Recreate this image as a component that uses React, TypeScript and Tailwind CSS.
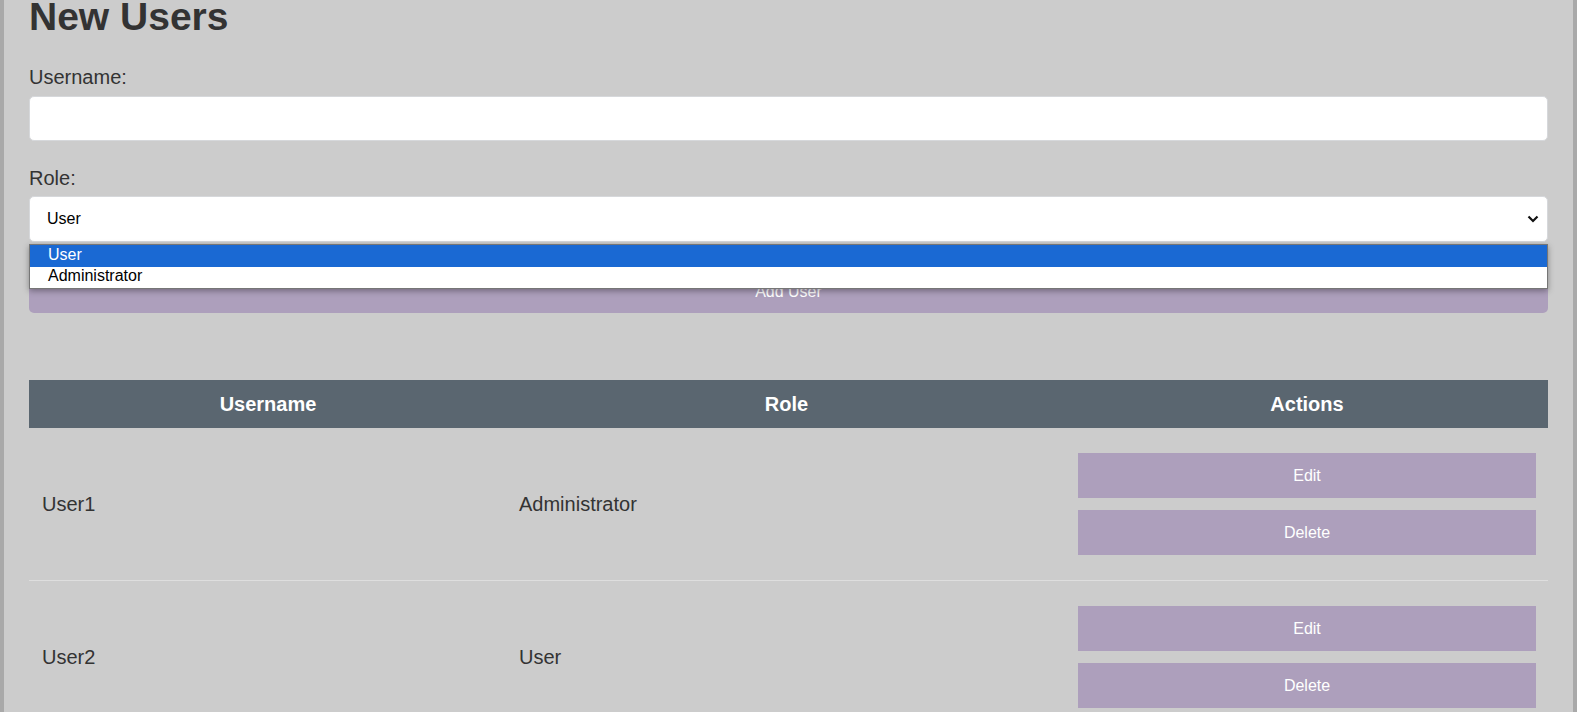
import React from 'react';

type Row = { name: string; role: string };

const rows: Row[] = [
  { name: 'User1', role: 'Administrator' },
  { name: 'User2', role: 'User' },
];

function Chevron() {
  return (
    <svg width="12" height="8" viewBox="0 0 12 8" className="pointer-events-none">
      <path d="M1.5 1.5 L6 6 L10.5 1.5" fill="none" stroke="#111" strokeWidth="2.2" />
    </svg>
  );
}

export default function App() {
  return (
    <div
      className="min-h-screen border-x-4 border-[#a9a9a9] bg-[#cccccc] text-[#333333]"
      style={{ fontFamily: '"Liberation Sans", Arial, sans-serif' }}
    >
      <div className="overflow-hidden px-[25px]">
        {/* form */}
        <h1 className="mt-[-6px] h-[45px] text-[39px] font-bold leading-[45px]">New Users</h1>

        <label className="mt-[27px] block text-[20px] leading-[23px]">Username:</label>
        <input
          type="text"
          className="mt-[7px] block h-[45px] w-full rounded-[5px] border border-[#d6d8db] bg-white px-3 text-[16px] outline-none"
        />

        <label className="mt-[26px] block text-[20px] leading-[23px]">Role:</label>
        <div className="relative mt-[6px]">
          <div className="flex h-[46px] w-full items-center justify-between rounded-[5px] border border-[#d6d8db] bg-white pl-[17px] pr-[8px] text-[16px] text-black">
            <span>User</span>
            <Chevron />
          </div>

          {/* open native list */}
          <div className="absolute left-0 right-0 top-[48px] z-10 border border-[#767676] bg-white text-[16px] shadow-[0_2px_6px_rgba(0,0,0,0.35)]">
            <div className="h-[22px] bg-[#1a69d3] pl-[18px] leading-[20px] text-white">User</div>
            <div className="h-[21px] pl-[18px] leading-[18px] text-black">Administrator</div>
          </div>
        </div>

        <button className="mt-[26px] block h-[45px] w-full rounded-[5px] bg-[#ad9fbc] pt-[3px] text-[16px] text-white">
          Add User
        </button>

        {/* list */}
        <table className="mt-[67px] w-full table-fixed border-collapse">
          <colgroup>
            <col className="w-[478px]" />
            <col className="w-[559px]" />
            <col />
          </colgroup>
          <thead>
            <tr className="h-[48px] bg-[#5a6670] text-[20px] font-bold text-white">
              <th className="text-center">Username</th>
              <th className="text-center">Role</th>
              <th className="text-center">Actions</th>
            </tr>
          </thead>
          <tbody>
            {rows.map((r) => (
              <tr key={r.name} className="border-b border-[#dedede] text-[20px]">
                <td className="px-[13px] align-middle">{r.name}</td>
                <td className="px-[12px] align-middle">{r.role}</td>
                <td className="px-[12px] py-[25px]">
                  <div className="flex flex-col gap-[12px]">
                    <button className="h-[45px] w-full bg-[#ad9fbc] text-[16px] text-white">Edit</button>
                    <button className="h-[45px] w-full bg-[#ad9fbc] text-[16px] text-white">Delete</button>
                  </div>
                </td>
              </tr>
            ))}
          </tbody>
        </table>
      </div>
    </div>
  );
}
